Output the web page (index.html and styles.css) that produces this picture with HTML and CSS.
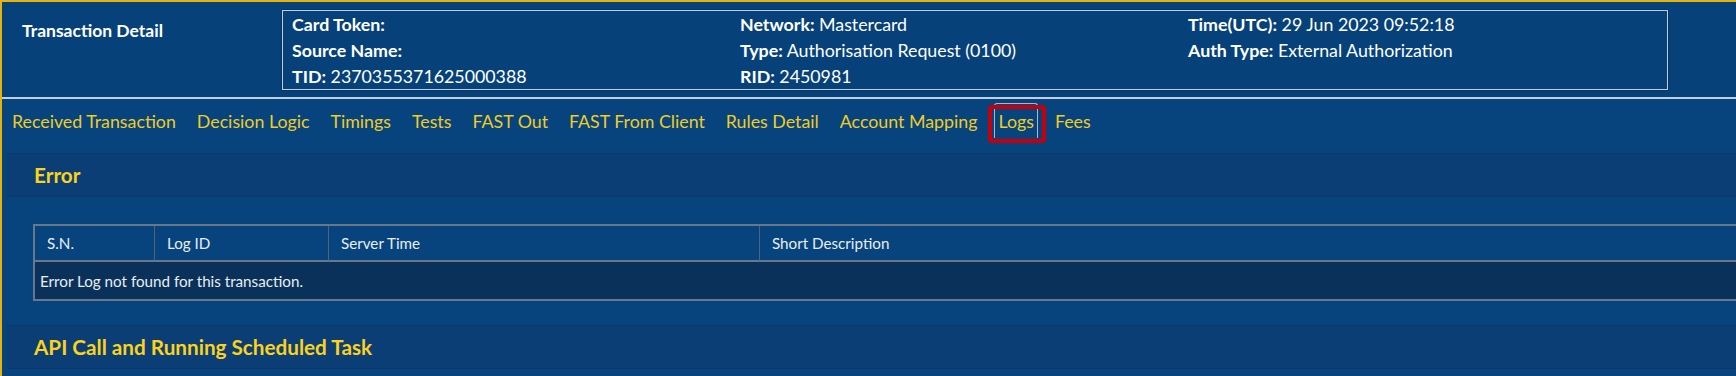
FILE: index.html
```html
<!DOCTYPE html>
<html lang="en">
<head>
    <meta charset="UTF-8">
    <meta name="viewport" content="width=device-width, initial-scale=1.0">
    <title>Transaction Detail</title>
    <link rel="stylesheet" href="styles.css">
</head>
<body>
    <header class="detail-head">
        <h1 class="detail-title">Transaction Detail</h1>
        <div class="detail-box">
            <div><b>Card Token:</b></div>
            <div><b>Network:</b> Mastercard</div>
            <div><b>Time(UTC):</b> 29 Jun 2023 09:52:18</div>
            <div><b>Source Name:</b></div>
            <div><b>Type:</b> Authorisation Request (0100)</div>
            <div><b>Auth Type:</b> External Authorization</div>
            <div><b>TID:</b> 2370355371625000388</div>
            <div><b>RID:</b> 2450981</div>
            <div></div>
        </div>
    </header>

    <nav class="tabs">
        <a class="tab" href="#">Received Transaction</a>
        <a class="tab" href="#">Decision Logic</a>
        <a class="tab" href="#">Timings</a>
        <a class="tab" href="#">Tests</a>
        <a class="tab" href="#">FAST Out</a>
        <a class="tab" href="#">FAST From Client</a>
        <a class="tab" href="#">Rules Detail</a>
        <a class="tab" href="#">Account Mapping</a>
        <a class="tab active" href="#">Logs<span class="mark"></span></a>
        <a class="tab" href="#">Fees</a>
    </nav>

    <main class="content">
        <section class="panel">
            <h2 class="panel-title">Error</h2>
            <div class="panel-body">
                <table class="log-table">
                    <thead>
                        <tr>
                            <th class="col-sn">S.N.</th>
                            <th class="col-id">Log ID</th>
                            <th class="col-time">Server Time</th>
                            <th>Short Description</th>
                        </tr>
                    </thead>
                    <tbody>
                        <tr>
                            <td colspan="4">Error Log not found for this transaction.</td>
                        </tr>
                    </tbody>
                </table>
            </div>
        </section>

        <section class="panel">
            <h2 class="panel-title">API Call and Running Scheduled Task</h2>
            <div class="panel-body"></div>
        </section>
    </main>
</body>
</html>
```

FILE: styles.css
```css
body {
    font-family: Lato, "Open Sans", sans-serif;
    background-color: #07437c;
    color: #ffffff;
    margin: 0;
    border-top: 2px solid #e4b40c;
    border-left: 2px solid #e4b40c;
    overflow: hidden;
    height: 100vh;
    box-sizing: border-box;
}

/* header with the transaction summary box */
.detail-head {
    display: flex;
    padding: 8px 68px 7px 20px;
    background-color: #06417a;
    border-bottom: 2px solid #c3cedb;
}

.detail-title {
    width: 260px;
    margin: 0;
    padding-top: 8px;
    font-size: 17.5px;
    line-height: 26px;
    font-weight: bold;
}

.detail-box {
    flex: 1;
    display: grid;
    grid-template-columns: 448px 448px 1fr;
    padding-left: 9px;
    border: 1px solid #c3cedb;
    box-shadow: 0 0 0 1px #053566;
    font-size: 17.8px;
    line-height: 26px;
}

/* tabs */
.tabs {
    display: flex;
    gap: 13px;
    padding: 4px 0 15px 6px;
}

.tab {
    position: relative;
    padding: 0 3px;
    border: 1px solid transparent;
    border-bottom: none;
    line-height: 34px;
    font-size: 17.8px;
    color: #f0cc24;
    text-decoration: none;
}

.tab.active {
    border-color: #a9b8c9;
    border-radius: 3px 3px 0 0;
}

.mark {
    position: absolute;
    left: -7px;
    right: -9px;
    top: 1px;
    bottom: -5px;
    border: 4px solid #c4000c;
    border-radius: 4px;
}

/* panels */
.content {
    padding-left: 5px;
}

.panel-title {
    margin: 0;
    padding-left: 27px;
    background-color: #0b3e74;
    border-top: 1px solid #0a3869;
    border-bottom: 1px solid #0a3869;
    font-size: 20.7px;
    line-height: 42px;
    color: #fcd21c;
}

.panel-body {
    padding: 27px 0 24px 26px;
    background-color: #07437c;
}

.log-table {
    width: 1760px;
    table-layout: fixed;
    border-collapse: separate;
    border-spacing: 0;
    border: 2px solid #687889;
    font-size: 15.2px;
    color: #e9eef3;
}

.log-table th {
    height: 34px;
    padding: 0 0 0 12px;
    text-align: left;
    font-weight: normal;
    border-bottom: 2px solid #687889;
    border-right: 1px solid #506377;
}

.log-table th:last-child {
    border-right: none;
}

.log-table .col-sn {
    width: 107px;
}

.log-table .col-id {
    width: 161px;
}

.log-table .col-time {
    width: 418px;
}

.log-table td {
    height: 37px;
    padding: 0 0 0 5px;
    background-color: #0a3159;
}
```
